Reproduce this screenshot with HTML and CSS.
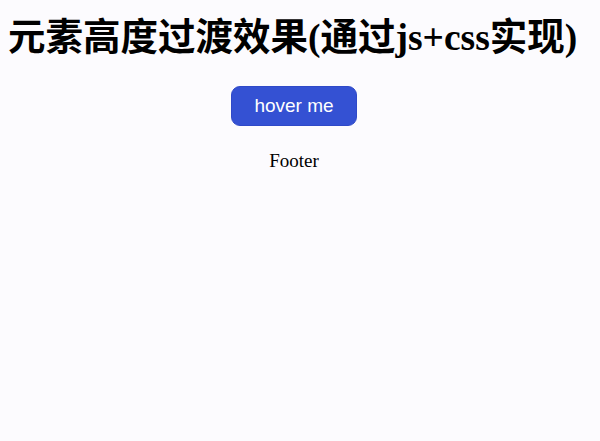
FILE: index.html
```html
<!DOCTYPE html>
<html lang="zh">
<head>
<meta charset="utf-8">
<title>元素高度过渡效果</title>
<link rel="stylesheet" href="styles.css">
</head>
<body>
<div class="page">
  <h1 class="title">元素高度过渡效果(通过js+css实现)</h1>
  <div class="actions">
    <button class="hover-btn" type="button">hover me</button>
  </div>
  <div class="footer">Footer</div>
</div>
</body>
</html>
```

FILE: styles.css
```css
html, body {
  margin: 0;
  padding: 0;
  background: #fcfbfe;
}
.page {
  width: 570px;
  margin-left: 9px;
  display: flex;
  flex-direction: column;
  font-family: "Liberation Serif", "Noto Sans CJK SC", serif;
  color: #000;
}
.title {
  margin: 16px 0 0 -1px;
  font-size: 37.5px;
  line-height: 44px;
  font-weight: bold;
  white-space: nowrap;
}
.actions {
  margin-top: 26px;
  display: flex;
  justify-content: center;
}
.hover-btn {
  width: 126px;
  height: 40px;
  border: 1px solid #2f49c8;
  border-radius: 9px;
  background: #3451d3;
  color: #fff;
  font-family: "Liberation Sans", Arial, sans-serif;
  font-size: 19px;
  padding: 0;
  display: flex;
  align-items: center;
  justify-content: center;
}
.footer {
  margin-top: 24px;
  text-align: center;
  font-size: 19px;
  line-height: 22px;
}
```
